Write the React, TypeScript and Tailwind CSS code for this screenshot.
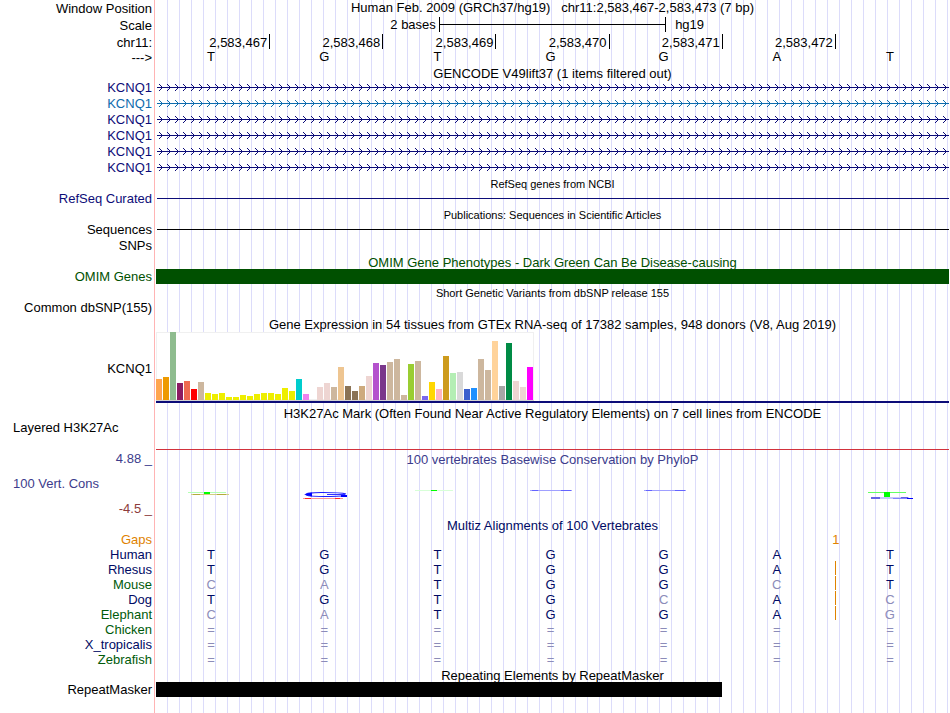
import type { ReactNode } from "react";

const POSITIONS = ["2,583,467", "2,583,468", "2,583,469", "2,583,470", "2,583,471", "2,583,472"];
const BASES = ["T", "G", "T", "G", "G", "A", "T"];

const TRANSCRIPTS = [
  { id: "t1", color: "#0c0c78" },
  { id: "t2", color: "#0e6cae" },
  { id: "t3", color: "#0c0c78" },
  { id: "t4", color: "#0c0c78" },
  { id: "t5", color: "#0c0c78" },
  { id: "t6", color: "#0c0c78" },
];

// Median expression per GTEx tissue: [colour, bar height in pixels]
const TISSUES: [string, number][] = [
  ["#ffa54f", 21], ["#ee9a00", 23], ["#8fbc8f", 68], ["#8b1c62", 17], ["#ee6a50", 19], ["#ff0000", 11],
  ["#cdb79e", 18], ["#eeee00", 7], ["#eeee00", 6], ["#eeee00", 7], ["#eeee00", 3], ["#eeee00", 3],
  ["#eeee00", 5], ["#eeee00", 4], ["#eeee00", 6], ["#eeee00", 7], ["#eeee00", 7], ["#eeee00", 6],
  ["#eeee00", 12], ["#eeee00", 9], ["#00cdcd", 21], ["#ee82ee", 6], ["#9ac0cd", 0], ["#eed5d2", 13],
  ["#eed5d2", 17], ["#cdb79e", 13], ["#eec591", 33], ["#8b7355", 14], ["#8b7355", 9], ["#cdaa7d", 14],
  ["#eed5d2", 24], ["#b452cd", 37], ["#7a378b", 35], ["#cdb79e", 38], ["#cdb79e", 41], ["#cdb79e", 5],
  ["#9acd32", 36], ["#cdb79e", 39], ["#7a67ee", 4], ["#ffd700", 18], ["#ffb6c1", 11], ["#cd9b1d", 44],
  ["#b4eeb4", 27], ["#d9d9d9", 28], ["#3a5fcd", 11], ["#1e90ff", 12], ["#cdb79e", 41], ["#cdb79e", 30],
  ["#ffd39b", 59], ["#a6a6a6", 14], ["#008b45", 57], ["#eed5d2", 19], ["#eed5d2", 13], ["#ff00ff", 33],
];

const SPECIES = [
  { name: "Human", green: false, bases: "TGTGGAT", gap: false },
  { name: "Rhesus", green: false, bases: "TGTGGAT", gap: true },
  { name: "Mouse", green: true, bases: "CATGGCT", gap: true },
  { name: "Dog", green: false, bases: "TGTGCAC", gap: true },
  { name: "Elephant", green: true, bases: "CATGGAG", gap: true },
  { name: "Chicken", green: true, bases: "=======", gap: false },
  { name: "X_tropicalis", green: false, bases: "=======", gap: false },
  { name: "Zebrafish", green: true, bases: "=======", gap: false },
];

function Row({ label, tone = "text-black", size = "h-4", children }: { label?: string; tone?: string; size?: string; children?: ReactNode }) {
  return (
    <div className={`flex ${size}`}>
      <div className={`w-[156px] shrink-0 whitespace-nowrap pr-[4px] text-right ${tone}`}>{label}</div>
      <div className="min-w-0 flex-1 pr-px">{children}</div>
    </div>
  );
}

function Title({ children, label, labelTone = "", tone = "text-black" }: { children: ReactNode; label?: string; labelTone?: string; tone?: string }) {
  return (
    <Row label={label} tone={labelTone} size="h-[15px]">
      <h2 className={`whitespace-pre text-center leading-[17px] ${tone}`}>{children}</h2>
    </Row>
  );
}

function SmallTitle({ children }: { children: ReactNode }) {
  return (
    <Row size="h-[15px]">
      <h2 className="whitespace-pre text-center text-[11px] leading-[17px]">{children}</h2>
    </Row>
  );
}

function Transcript({ id, color }: { id: string; color: string }) {
  return (
    <div className="pl-px pt-1">
      <svg className="block h-[7px] w-full">
        <defs>
          <pattern id={id} width="8" height="7" patternUnits="userSpaceOnUse">
            <path d="M2 0 L5.5 3.5 L2 7" fill="none" stroke={color} strokeWidth="1" />
          </pattern>
        </defs>
        <rect width="100%" height="7" fill={`url(#${id})`} />
        <rect y="3" width="100%" height="1" fill={color} />
      </svg>
    </div>
  );
}

function Line({ color }: { color: string }) {
  return (
    <div className="pl-px pt-[7px]">
      <div className={`h-px ${color}`} />
    </div>
  );
}

function Logo({ index }: { index: number }) {
  return (
    <svg width="46" height="10" viewBox="0 0 46 10" className="block">
      {index === 0 && (
        <>
          <rect x="0" y="2" width="38" height="1" fill="#b4ffb4" />
          <rect x="16" y="2" width="6" height="2" fill="#00ff00" />
          <rect x="3" y="4" width="38" height="1" fill="#d2cd82" />
          <rect x="5" y="4" width="7" height="1" fill="#b4aa3c" />
          <rect x="29" y="4" width="9" height="1" fill="#b4aa3c" />
        </>
      )}
      {index === 1 && (
        <>
          <path d="M45 4 C40 2.4 30 2.5 20 2.5 C10 2.5 5 3.4 5 4.5 C5 5.9 12 6.5 22 6.5 C32 6.5 39 6.4 44 5.5" fill="none" stroke="#1e1eff" strokeWidth="1.2" />
          <path d="M3 4.5 L11 2.5 V6.5 Z" fill="#0000ff" />
          <path d="M26 4.5 H44" stroke="#3232ff" strokeWidth="1" />
          <rect x="40" y="5" width="6" height="2" fill="#0000ff" />
          <path d="M2 8.5 H42" stroke="#ff9696" strokeWidth="1" />
          <path d="M4 8.5 H10 M34 8.5 H39" stroke="#ff2828" strokeWidth="1" />
        </>
      )}
      {index === 2 && (
        <>
          <rect x="1" y="0" width="38" height="1" fill="#d7ffd7" />
          <rect x="17" y="0" width="6" height="1" fill="#00ff00" />
        </>
      )}
      {(index === 3 || index === 4) && (
        <>
          <rect x="3" y="0" width="42" height="1" fill="#a0a0ff" />
          <rect x="5" y="0" width="6" height="1" fill="#6464ff" />
          <rect x="34" y="0" width="10" height="1" fill="#6464ff" />
        </>
      )}
      {index === 6 && (
        <>
          <rect x="1" y="2" width="38" height="1" fill="#64ff64" />
          <rect x="4" y="7" width="38" height="2" fill="#c8c8fa" />
          <rect x="4" y="7" width="9" height="2" fill="#6464e6" />
          <rect x="26" y="8" width="14" height="1" fill="#8282ff" />
          <rect x="34" y="7" width="7" height="1" fill="#6464e6" />
          <rect x="40" y="8" width="6" height="1" fill="#0000ff" />
          <rect x="17" y="2" width="6" height="5" fill="#00ff00" />
        </>
      )}
    </svg>
  );
}

function baseTone(base: string, reference: string) {
  return base === reference ? "text-[#000a64]" : "text-[#8c8cb9]";
}

export default function App() {
  return (
    <main className="relative min-h-screen bg-white font-['Liberation_Sans',Arial,sans-serif] text-[13px] leading-[15px] text-black">
      <div className="absolute inset-y-0 left-[154px] right-0 flex gap-px" aria-hidden="true">
        <div className="w-px bg-[#ffb4b4]" />
        <div className="flex-1 bg-[repeating-linear-gradient(to_right,transparent_0px,transparent_11px,#dcdcfa_11px,#dcdcfa_12px)]" />
      </div>

      <div className="relative">
        <div className="leading-[17px]">
          <Row label="Window Position" size="h-[17px]">
            <h1 className="whitespace-pre text-center leading-[15px]">{"Human Feb. 2009 (GRCh37/hg19)   chr11:2,583,467-2,583,473 (7 bp)"}</h1>
          </Row>
          <Row label="Scale" size="h-[17px]">
            <div className="grid grid-cols-[5fr_4fr_5fr] pr-px leading-[15px]">
              <div className="pr-[3px] text-right">2 bases</div>
              <div className="-mr-px flex h-[15px] items-center border-x border-black">
                <div className="h-px w-full bg-black" />
              </div>
              <div className="pl-[10px]">hg19</div>
            </div>
          </Row>
          <Row label="chr11:" size="h-[15px]">
            <div className="grid grid-cols-7 pr-px">
              {POSITIONS.map((p) => (
                <div key={p} className="-mr-px h-[15px] border-r border-black pr-[2px] text-right">{p}</div>
              ))}
            </div>
          </Row>
        </div>
        <Row label="--->" size="h-4" tone="leading-[17px]">
          <div className="grid grid-cols-7 pr-px">
            {BASES.map((b, i) => (
              <div key={i} className="pr-[3px] text-center">{b}</div>
            ))}
          </div>
        </Row>

        <Title>GENCODE V49lift37 (1 items filtered out)</Title>
        {TRANSCRIPTS.map((t, i) => (
          <Row key={t.id} label="KCNQ1" tone={i === 1 ? "text-[#0e6cae]" : "text-[#0c0c78]"}>
            <Transcript id={t.id} color={t.color} />
          </Row>
        ))}

        <SmallTitle>RefSeq genes from NCBI</SmallTitle>
        <Row label="RefSeq Curated" tone="text-[#0c0c78]">
          <Line color="bg-[#0c0c78]" />
        </Row>

        <SmallTitle>Publications: Sequences in Scientific Articles</SmallTitle>
        <Row label="Sequences">
          <Line color="bg-black" />
        </Row>
        <Row label="SNPs" />

        <Title tone="text-[#005000]">OMIM Gene Phenotypes - Dark Green Can Be Disease-causing</Title>
        <Row label="OMIM Genes" tone="text-[#005000]">
          <div className="h-[15px] bg-[#005000]" />
        </Row>

        <SmallTitle>Short Genetic Variants from dbSNP release 155</SmallTitle>
        <Row label="Common dbSNP(155)" />

        <Title>Gene Expression in 54 tissues from GTEx RNA-seq of 17382 samples, 948 donors (V8, Aug 2019)</Title>
        <Row label="KCNQ1" size="h-[74px]" tone="pt-[30px]">
          <div className="pt-px">
            <div className="flex h-[69px] w-[378px] items-end gap-px border-b border-[#d2d2d2] bg-white inset-ring inset-ring-[#f0f0f0]">
              {TISSUES.map(([color, height], i) => (
                <div key={i} className="w-[6px] shrink-0" style={{ height, backgroundColor: color }} />
              ))}
            </div>
            <div className="h-[2px] bg-[#0c0c78]" />
          </div>
        </Row>

        <Title>H3K27Ac Mark (Often Found Near Active Regulatory Elements) on 7 cell lines from ENCODE</Title>
        <div className="flex h-[31px]">
          <div className="w-[156px] shrink-0 pl-[13px]">Layered H3K27Ac</div>
          <div className="flex-1 pr-px pt-[29px]">
            <div className="h-px bg-[#d2323c]" />
          </div>
        </div>

        <Title label="4.88 _" labelTone="text-[#3c3c8c]" tone="text-[#3c3c8c]">100 vertebrates Basewise Conservation by PhyloP</Title>
        <div className="flex h-[51px]">
          <div className="flex w-[156px] shrink-0 flex-col gap-[10px] pl-[13px] pr-[4px] pt-[10px]">
            <div className="text-[#3c3c8c]">100 Vert. Cons</div>
            <div className="text-right text-[#8c3c3c]">-4.5 _</div>
          </div>
          <div className="grid flex-1 grid-cols-7 pr-[2px] pt-6">
            {BASES.map((_, i) => (
              <div key={i} className="flex justify-center pr-[3px]">
                <Logo index={i} />
              </div>
            ))}
          </div>
        </div>

        <Title tone="text-[#000a64]">Multiz Alignments of 100 Vertebrates</Title>
        <div className="pr-[2px]">
          <table className="w-full table-fixed">
            <colgroup>
              <col className="w-[156px]" />
              {BASES.map((_, i) => (
                <col key={i} />
              ))}
            </colgroup>
            <tbody>
              <tr className="h-[15px] text-[#e08200]">
                <th scope="row" className="pr-[4px] text-right font-normal">Gaps</th>
                <td colSpan={6} />
                <td className="relative">
                  <span className="absolute left-px top-0 -translate-x-1/2">1</span>
                </td>
              </tr>
              {SPECIES.map((s) => (
                <tr key={s.name} className="h-[15px]">
                  <th scope="row" className={`pr-[4px] text-right font-normal ${s.green ? "text-[#005a0a]" : "text-[#000a64]"}`}>{s.name}</th>
                  {s.bases.split("").map((b, i) => (
                    <td key={i} className={`relative pr-[3px] text-center ${baseTone(b, BASES[i])}`}>
                      {b}
                      {s.gap && i === 6 && <span className="absolute -top-px left-0 h-[14px] w-px bg-[#e08200]" />}
                    </td>
                  ))}
                </tr>
              ))}
            </tbody>
          </table>
        </div>

        <Title>Repeating Elements by RepeatMasker</Title>
        <Row label="RepeatMasker">
          <div className="grid grid-cols-7 pr-px">
            <div className="col-span-5 h-[15px] bg-black" />
          </div>
        </Row>
      </div>
    </main>
  );
}
